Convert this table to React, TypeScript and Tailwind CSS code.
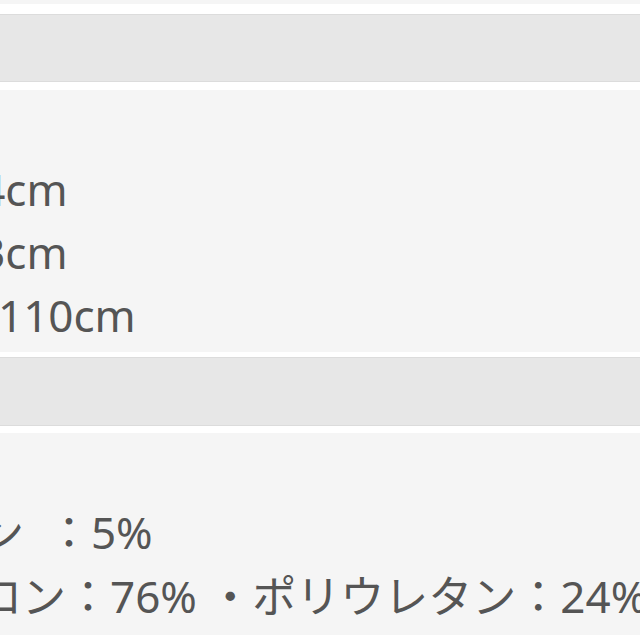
import React from 'react';

const font = "font-['Noto_Sans','Noto_Sans_CJK_JP',sans-serif]";

const App: React.FC = () => {
  return (
    <div className={`w-[640px] h-[640px] overflow-hidden bg-white text-[44px] leading-[63px] text-[#555555] ${font}`}>
      {/* tail of previous section */}
      <div className="h-[4px] bg-[#f5f5f5]" />

      {/* Header bar: size */}
      <div className="mt-[10px] h-[68px] bg-[#e7e7e7] border-y border-[#dcdcdc]" />

      {/* Size rows */}
      <div className="mt-[8px] bg-[#f5f5f5] pt-[68px] pb-[5px] whitespace-nowrap">
        <div className="-ml-[265px]">ウエスト：64cm</div>
        <div className="-ml-[221px]">ヒップ：83cm</div>
        <div className="-ml-[46px]">：110cm</div>
      </div>

      {/* Header bar: material */}
      <div className="mt-[5px] h-[69px] bg-[#e7e7e7] border-y border-[#dcdcdc]" />

      {/* Material rows */}
      <div className="mt-[7px] bg-[#f5f5f5] pt-[67px] pb-[7px] leading-[64px] whitespace-pre">
        <div className="-ml-[284px]">・ポリウレタン  ：5%</div>
        <div className="-ml-[110px]">ナイロン：76% ・ポリウレタン：24%</div>
      </div>
    </div>
  );
};

export default App;
